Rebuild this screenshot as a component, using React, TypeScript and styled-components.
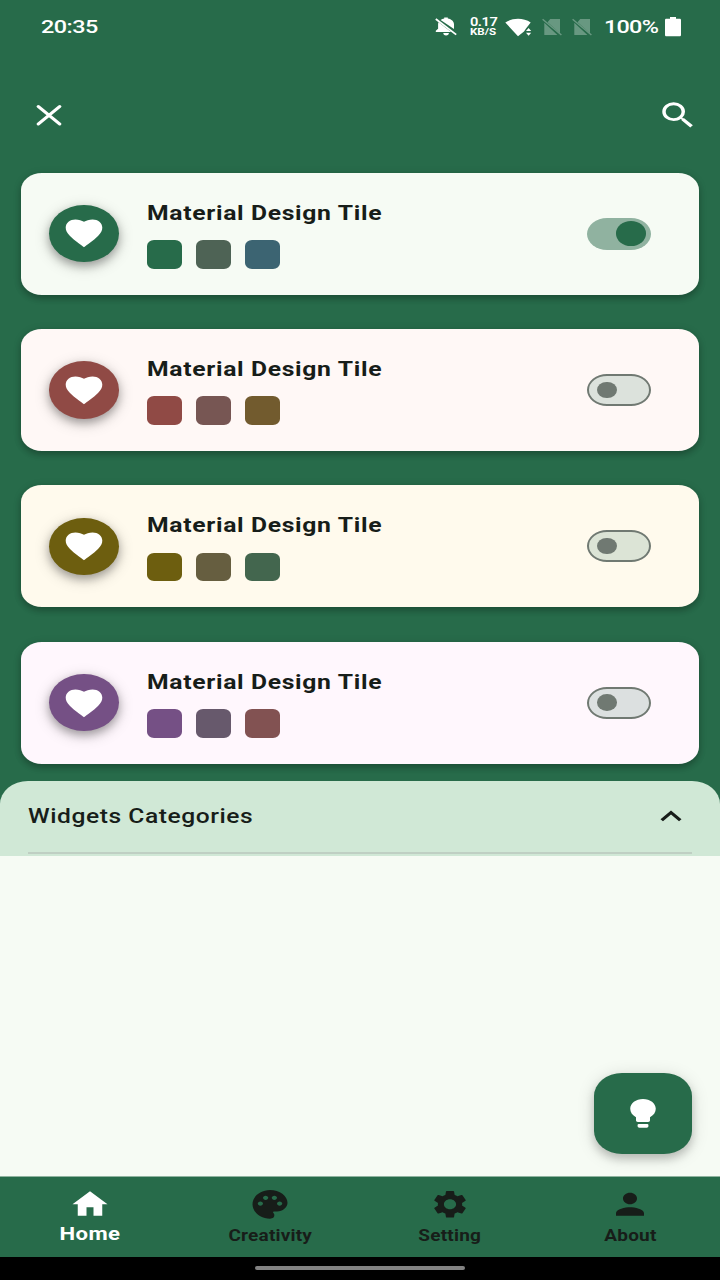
import React from "react";
import styled, { createGlobalStyle, css } from "styled-components";
import { MdSearch, MdHome, MdPalette, MdSettings, MdPerson, MdKeyboardArrowUp } from "react-icons/md";

const GlobalStyle = createGlobalStyle`
  * { box-sizing: border-box; }
  body { margin: 0; background: #000; font-family: Roboto, "Liberation Sans", sans-serif; }
`;

const green = "#276b4a";
const surface = "#f6fbf4";
const ink = "#171d19";

const Screen = styled.main`
  width: 720px;
  height: 1280px;
  display: flex;
  flex-direction: column;
  overflow: hidden;
  background: ${green};
`;

// Labels use a wide face: every run of text is stretched horizontally.
const Label = styled.span<{ $size: number; $weight?: number; $color?: string; $spacing?: number; $origin?: string }>`
  display: block;
  white-space: nowrap;
  font-size: ${(p) => p.$size}px;
  font-weight: ${(p) => p.$weight ?? 500};
  color: ${(p) => p.$color ?? "#fff"};
  letter-spacing: ${(p) => p.$spacing ?? 0}px;
  line-height: 1.2;
  transform: scaleX(1.219);
  transform-origin: ${(p) => p.$origin ?? "left"} center;
`;

const iconSize = css`
  display: block;
  flex: none;
  width: 42px;
  height: 34.5px;
`;

const StatusBar = styled.header`
  height: 54px;
  flex: none;
  display: flex;
  align-items: center;
  justify-content: space-between;
  padding: 0 39px 0 41px;
`;

const StatusGroup = styled.div`
  display: flex;
  align-items: center;
`;

const NetSpeed = styled.div`
  width: 35px;
  margin-left: 13px;
  display: flex;
  flex-direction: column;
`;

const SpeedLine = styled(Label)`
  line-height: 9px;
`;

const Percent = styled.div`
  width: 61px;
  margin-left: 12px;
`;

const AppBar = styled.nav`
  height: 118px;
  flex: none;
  display: flex;
  align-items: center;
  justify-content: space-between;
  padding: 5px 21px 0 28px;
  color: #fff;
`;

const IconButton = styled.button`
  border: 0;
  padding: 0;
  background: none;
  color: inherit;
  svg { ${iconSize} }
`;

const TileList = styled.section`
  flex: none;
  display: flex;
  flex-direction: column;
  gap: 34.4px;
  padding: 0.5px 21px 17px;
`;

const Tile = styled.article<{ $bg: string }>`
  height: 122px;
  display: flex;
  align-items: center;
  padding: 0 48px 0 28px;
  border-radius: 21px / 17px;
  background: ${(p) => p.$bg};
  box-shadow: 0 4px 6px rgba(0, 0, 0, 0.2), 0 1px 9px rgba(0, 0, 0, 0.12);
`;

const Avatar = styled.div<{ $bg: string }>`
  width: 70px;
  height: 57.4px;
  flex: none;
  display: flex;
  align-items: center;
  justify-content: center;
  border-radius: 50%;
  background: ${(p) => p.$bg};
  box-shadow: 0 4px 8px rgba(0, 0, 0, 0.26), 0 4px 16px rgba(0, 0, 0, 0.2);
  color: #fff;
  svg { display: block; width: 40px; height: 30px; }
`;

const TileBody = styled.div`
  flex: 1;
  margin-left: 28px;
  padding-top: 2.4px;
  display: flex;
  flex-direction: column;
  gap: 15px;
`;

const Swatches = styled.div`
  display: flex;
  gap: 14px;
`;

const Swatch = styled.i<{ $bg: string }>`
  width: 35px;
  height: 28.7px;
  border-radius: 7px / 6px;
  background: ${(p) => p.$bg};
`;

const Track = styled.div<{ $on: boolean; $bg: string }>`
  width: 64px;
  height: 32px;
  display: flex;
  align-items: center;
  justify-content: ${(p) => (p.$on ? "flex-end" : "flex-start")};
  padding: ${(p) => (p.$on ? "0 5px" : "0 8px")};
  border: ${(p) => (p.$on ? "0" : "2px solid #707972")};
  border-radius: 20px / 16px;
  background: ${(p) => p.$bg};
`;

const Thumb = styled.i<{ $on: boolean }>`
  width: ${(p) => (p.$on ? 30 : 19.7)}px;
  height: ${(p) => (p.$on ? 24.6 : 16.4)}px;
  border-radius: 50%;
  background: ${(p) => (p.$on ? green : "#707972")};
`;

const SheetHeader = styled.section`
  height: 75px;
  flex: none;
  display: flex;
  flex-direction: column;
  padding: 0 28px;
  border-radius: 28px 28px 0 0 / 23px 23px 0 0;
  background: #d0e8d6;
`;

const SheetRow = styled.div`
  height: 71px;
  display: flex;
  align-items: center;
  justify-content: space-between;
  color: ${ink};
  svg { ${iconSize} }
`;

const Divider = styled.hr`
  width: 100%;
  height: 2px;
  margin: 0;
  border: 0;
  background: #bfcfc3;
`;

const Content = styled.section`
  flex: 1;
  display: flex;
  align-items: flex-end;
  justify-content: flex-end;
  padding: 0 28px 22.4px;
  background: ${surface};
`;

const Fab = styled.button`
  width: 98px;
  height: 80.4px;
  display: flex;
  align-items: center;
  justify-content: center;
  padding: 0;
  border: 0;
  border-radius: 28px / 23px;
  background: ${green};
  box-shadow: 0 5px 8px rgba(0, 0, 0, 0.18), 0 3px 18px rgba(0, 0, 0, 0.14);
  color: #fff;
  svg { ${iconSize} }
`;

const BottomNav = styled.nav`
  height: 81px;
  flex: none;
  display: grid;
  grid-template-columns: repeat(4, 1fr);
  border-top: 1px solid #8fb39f;
`;

const NavItem = styled.a<{ $active?: boolean }>`
  display: flex;
  flex-direction: column;
  align-items: center;
  gap: ${(p) => (p.$active ? 2 : 5.5)}px;
  padding-top: 9.5px;
  color: ${(p) => (p.$active ? "#fff" : ink)};
  svg { ${iconSize} }
`;

const Gear = styled(MdSettings)`
  transform: scale(0.965);
`;

const GestureArea = styled.footer`
  height: 23px;
  flex: none;
  display: flex;
  justify-content: center;
  align-items: center;
  padding-bottom: 1px;
  background: #000;
`;

const GestureBar = styled.i`
  width: 210px;
  height: 4px;
  border-radius: 2px;
  background: #828282;
`;

const StatusIcon = styled.svg<{ $left?: number }>`
  display: block;
  flex: none;
  margin-left: ${(p) => p.$left ?? 0}px;
`;

const SimOff = ({ left }: { left: number }) => (
  <StatusIcon $left={left} width="20" height="18" viewBox="0 0 20 18" opacity="0.3">
    <path d="M8.2 1H18V15.2L5.6 4.2ZM2.3 4.8 15.4 17H2.3Z" fill="#fff" />
    <path d="M.6 1.2 19.4 17" stroke="#fff" strokeWidth="1.5" />
  </StatusIcon>
);

const tiles = [
  { bg: "#f6fbf4", colors: ["#276b4a", "#4e6355", "#3c6472"], on: true, track: "#90b2a0" },
  { bg: "#fff8f6", colors: ["#904a45", "#775653", "#725b2e"], on: false, track: "#dce2dc" },
  { bg: "#fffaed", colors: ["#6d5e0f", "#665e40", "#43664e"], on: false, track: "#dce4d6" },
  { bg: "#fff7fd", colors: ["#755085", "#67596c", "#825252"], on: false, track: "#dce0e0" },
];

const navItems = [
  { label: "Home", Icon: MdHome, active: true },
  { label: "Creativity", Icon: MdPalette },
  { label: "Setting", Icon: Gear },
  { label: "About", Icon: MdPerson },
];

export default function App() {
  return (
    <Screen>
      <GlobalStyle />
      <StatusBar>
        <Label $size={19.2} $spacing={-0.4}>20:35</Label>
        <StatusGroup>
          <StatusIcon width="22" height="20" viewBox="0 0 22 20" fill="#fff">
            <path d="M5.600 3C6.700 2.100 7.900 1.700 9.200 1.400V.6h3.600v.8c3.900.7 6.200 3 6.200 5.900v4.800ZM3.500 5.200 16.200 15H.8v-1.300l2.300-1.900V7.300c0-.8.1-1.400.4-2.100ZM8.300 16h5.600c0 1.400-1 2.500-2.800 2.500S8.300 17.400 8.300 16Z" />
            <path d="M.8 2 21.200 17.600" stroke="#fff" strokeWidth="1.8" />
          </StatusIcon>
          <NetSpeed>
            <SpeedLine $size={12} $weight={600} $spacing={-0.4}>0.17</SpeedLine>
            <SpeedLine $size={9.5} $weight={700}>KB/S</SpeedLine>
          </NetSpeed>
          <StatusIcon width="27" height="19" viewBox="0 0 27 19" fill="#fff">
            <path d="M.3 4.500C7.500-.4 18.500-.4 25.700 4.500L21 10.400 19 13.500 13 18.200Z" />
            <path d="m21 13 2.600-2.900 2.600 2.900Zm0 1.800h5.200L23.600 17.700Z" />
          </StatusIcon>
          <SimOff left={10} />
          <SimOff left={10} />
          <Percent><Label $size={19.2} $spacing={-0.6}>100%</Label></Percent>
          <StatusIcon width="16" height="20" viewBox="0 0 16 20" fill="#fff">
            <path d="M5 .1h6v1.700h3.500c.9 0 1.500.5 1.500 1.300v14.900c0 .8-.6 1.300-1.500 1.300H1.500C.6 19.300 0 18.800 0 18V3.100C0 2.300.6 1.800 1.500 1.800H5Z" />
          </StatusIcon>
        </StatusGroup>
      </StatusBar>

      <AppBar>
        <IconButton aria-label="Close">
          <svg viewBox="0 0 24 24" preserveAspectRatio="none">
            <path d="M5.900 5.900 18.100 18.100M18.100 5.900 5.900 18.100" stroke="currentColor" strokeWidth="2" strokeLinecap="round" />
          </svg>
        </IconButton>
        <IconButton aria-label="Search"><MdSearch preserveAspectRatio="none" /></IconButton>
      </AppBar>

      <TileList>
        {tiles.map((t) => (
          <Tile key={t.bg} $bg={t.bg}>
            <Avatar $bg={t.colors[0]}>
              <svg viewBox="-1.500 -1.200 40 30" fill="currentColor">
                <path d="M18.500 28C15.500 25.700 8.500 21.100 4.500 16.900 1.500 13.800 .2 11.700.2 8.400.2 3.500 4.500.2 9.900.2c3.400 0 6.500.9 8.600 2.400C20.600 1.100 23.700.2 27.100.2c5.400 0 9.700 3.300 9.700 8.200 0 3.300-1.300 5.400-4.300 8.500C28.500 21.100 21.500 25.700 18.500 28Z" />
              </svg>
            </Avatar>
            <TileBody>
              <Label $size={20.3} $weight={700} $spacing={0.54} $color={ink}>Material Design Tile</Label>
              <Swatches>{t.colors.map((c) => <Swatch key={c} $bg={c} />)}</Swatches>
            </TileBody>
            <Track $on={t.on} $bg={t.track}><Thumb $on={t.on} /></Track>
          </Tile>
        ))}
      </TileList>

      <SheetHeader>
        <SheetRow>
          <Label $size={20.2} $spacing={0.45} $color={ink}>Widgets Categories</Label>
          <MdKeyboardArrowUp preserveAspectRatio="none" />
        </SheetRow>
        <Divider />
      </SheetHeader>

      <Content>
        <Fab aria-label="Ideas">
          <svg viewBox="0 0 24 24" preserveAspectRatio="none" fill="currentColor">
            <path d="M12 2C7.900 2 4.700 5 4.700 8.800c0 2.500 1.300 4.600 3.300 5.900V17a1 1 0 0 0 1 1h6a1 1 0 0 0 1-1v-2.300c2-1.300 3.300-3.400 3.300-5.900C19.300 5 16.100 2 12 2ZM9.600 19.500h4.800q.7 0 .7.700v.8q0 1-1 1H9.900q-1 0-1-1v-.8q0-.7.7-.7Z" />
          </svg>
        </Fab>
      </Content>

      <BottomNav>
        {navItems.map(({ label, Icon, active }) => (
          <NavItem key={label} $active={active}>
            <Icon preserveAspectRatio="none" />
            <Label $size={active ? 18.2 : 15.6} $weight={700} $spacing={active ? 0.3 : 0.15} $origin="center" $color={active ? "#fff" : ink}>{label}</Label>
          </NavItem>
        ))}
      </BottomNav>
      <GestureArea><GestureBar /></GestureArea>
    </Screen>
  );
}
